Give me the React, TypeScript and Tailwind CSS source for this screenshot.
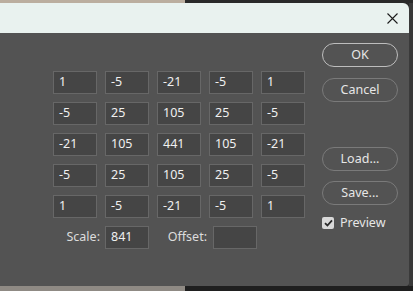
const matrix = [
  ["1", "-5", "-21", "-5", "1"],
  ["-5", "25", "105", "25", "-5"],
  ["-21", "105", "441", "105", "-21"],
  ["-5", "25", "105", "25", "-5"],
  ["1", "-5", "-21", "-5", "1"],
]

function Cell({ value }: { value: string }) {
  return (
    <div className="flex h-[23px] w-[44px] items-center border border-[#676767] bg-[#454545] pl-[5px] text-[12.5px] text-[#f0f0f0]">
      {value}
    </div>
  )
}

function PillButton({ label, primary }: { label: string; primary?: boolean }) {
  return (
    <div
      className={[
        "flex h-[24px] w-[76px] items-center justify-center rounded-full border text-[12.5px] text-[#e6e6e6]",
        primary ? "border-[#bdbdbd]" : "border-[#7a7a7a]",
      ].join(" ")}
    >
      {label}
    </div>
  )
}

export default function App() {
  return (
    <div className="flex h-[291px] w-[413px] flex-col overflow-hidden bg-[#2b2b2b] font-['Noto_Sans',sans-serif]">
      {/* backdrop strip on top */}
      <div className="flex h-[3px] shrink-0">
        <div className="w-[185px] bg-[#bbae9f]" />
        <div className="flex-1 bg-[#2a2a2a]" />
      </div>

      <div className="flex h-[283px] shrink-0">
        {/* dialog */}
        <div className="flex w-[409px] flex-col overflow-hidden rounded-tr-[6px] rounded-br-[3px]">
          <div className="flex h-[30px] shrink-0 items-center justify-end bg-[#e9f2ef] pr-[11px]">
            <svg width="11" height="11" viewBox="0 0 11 11">
              <path d="M0.5 0.5 L10.5 10.5 M10.5 0.5 L0.5 10.5" stroke="#1c1c1c" strokeWidth="1.1" />
            </svg>
          </div>

          <div className="flex flex-1 bg-[#535353]">
            <div className="w-[322px] pl-[53px] pt-[38px]">
              <div className="grid grid-cols-[repeat(5,44px)] gap-x-[8px] gap-y-[8px]">
                {matrix.flat().map((v, i) => (
                  <Cell key={i} value={v} />
                ))}
              </div>
              <div className="mt-[8px] flex items-center text-[12.5px] text-[#dcdcdc]">
                <div className="w-[52px] pr-[5px] text-right">Scale:</div>
                <Cell value="841" />
                <div className="w-[64px] pr-[6px] text-right">Offset:</div>
                <Cell value="" />
              </div>
            </div>

            <div className="flex flex-col pt-[10px]">
              <PillButton label="OK" primary />
              <div className="mt-[11px]">
                <PillButton label="Cancel" />
              </div>
              <div className="mt-[45px]">
                <PillButton label="Load..." />
              </div>
              <div className="mt-[10px]">
                <PillButton label="Save..." />
              </div>
              <div className="mt-[9px] flex items-center gap-[6px] text-[12.5px] text-[#e6e6e6]">
                <div className="flex h-[12px] w-[12px] items-center justify-center rounded-[2px] bg-[#d9d9d9]">
                  <svg width="9" height="8" viewBox="0 0 9 8">
                    <path d="M1 4.2 L3.4 6.5 L8 1.3" fill="none" stroke="#2a2a2a" strokeWidth="1.8" />
                  </svg>
                </div>
                Preview
              </div>
            </div>
          </div>
        </div>
        <div className="flex-1 bg-[#3a3a3a]" />
      </div>

      {/* backdrop strip at bottom */}
      <div className="flex flex-1">
        <div className="w-[185px] bg-[#8f8a84]" />
        <div className="flex-1 bg-[#1f1f1f]" />
      </div>
    </div>
  )
}
